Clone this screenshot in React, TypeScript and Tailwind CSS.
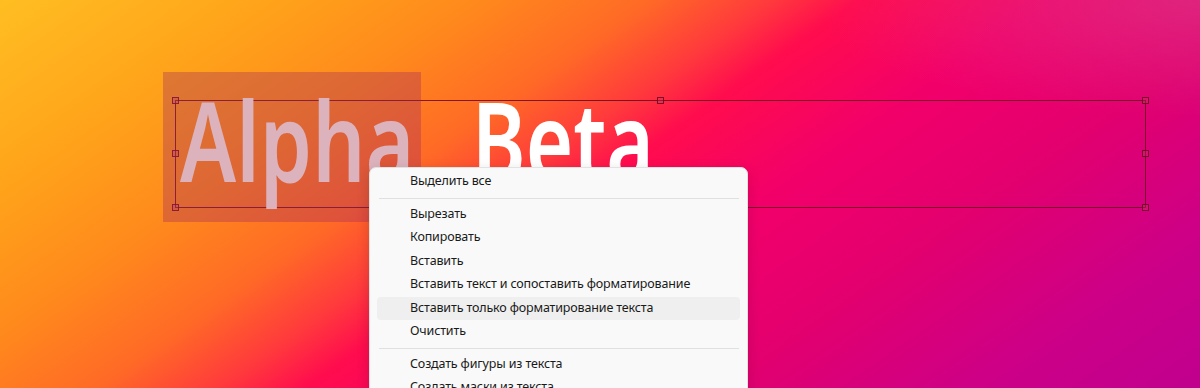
import React from 'react';

type MenuEntry = { label?: string; sep?: boolean; active?: boolean };

const items: MenuEntry[] = [
  { label: 'Выделить все' },
  { sep: true },
  { label: 'Вырезать' },
  { label: 'Копировать' },
  { label: 'Вставить' },
  { label: 'Вставить текст и сопоставить форматирование' },
  { label: 'Вставить только форматирование текста', active: true },
  { label: 'Очистить' },
  { sep: true },
  { label: 'Создать фигуры из текста' },
  { label: 'Создать маски из текста' },
];

// resize handles around the text frame
const handles = [
  '-left-[4px] -top-[4px]',
  'left-[481px] -top-[4px]',
  '-right-[4px] -top-[4px]',
  '-left-[4px] top-[49px]',
  '-right-[4px] top-[49px]',
  '-left-[4px] -bottom-[4px]',
  'left-[481px] -bottom-[4px]',
  '-right-[4px] -bottom-[4px]',
];

export default function App() {
  return (
    <div className="relative h-[388px] w-full overflow-hidden bg-[radial-gradient(ellipse_32%_30%_at_100%_0%,rgba(210,90,150,0.4),transparent),linear-gradient(145deg,#ffbe22_0%,#ffa21a_16%,#ff8a1c_27%,#ff6a26_37%,#ff3a3c_44%,#ff0c4e_49%,#f2006a_60%,#e2006f_73%,#cc0088_88%,#c0008e_100%)] font-['Noto_Sans',sans-serif]">
      {/* text frame on the canvas */}
      <div className="absolute left-[175px] top-[100px] h-[108px] w-[971px] border border-[#6a0820]/85">
        {handles.map((h) => (
          <div key={h} className={`absolute size-[7px] border border-[#6a0820]/85 bg-[#c84060]/30 ${h}`} />
        ))}
      </div>

      {/* text line, first word selected */}
      <div className="absolute left-[163px] top-[72px] flex items-start whitespace-nowrap text-[110px] font-semibold leading-none">
        <div className="h-[150px] w-[258px] bg-[#a02860]/35 pl-[17px] pt-[12px]">
          <div className="origin-left scale-x-[0.76] text-[#dcb2bc]">Alpha</div>
        </div>
        <div className="ml-[51px] pt-[12px]">
          <div className="origin-left scale-x-[0.74] text-white">Beta</div>
        </div>
      </div>

      {/* context menu */}
      <div className="absolute left-[369px] top-[167px] w-[379px] rounded-[7px] border border-[#e2e2e2] bg-[#f9f9f9] pt-[2px] shadow-[0_4px_14px_rgba(0,0,0,0.14)]">
        {items.map((it, i) =>
          it.sep ? (
            <div key={i} className="flex h-[9px] items-center pl-[9px] pr-[8px]">
              <div className="h-px w-full bg-[#e0e0e0]" />
            </div>
          ) : (
            <div
              key={i}
              className={`mx-[7px] flex h-[23.5px] items-center rounded-[4px] pl-[33px] text-[12.5px] tracking-[-0.15px] text-[#1a1a1a] ${it.active ? 'bg-[#efefef]' : ''}`}
            >
              {it.label}
            </div>
          )
        )}
      </div>
    </div>
  );
}
